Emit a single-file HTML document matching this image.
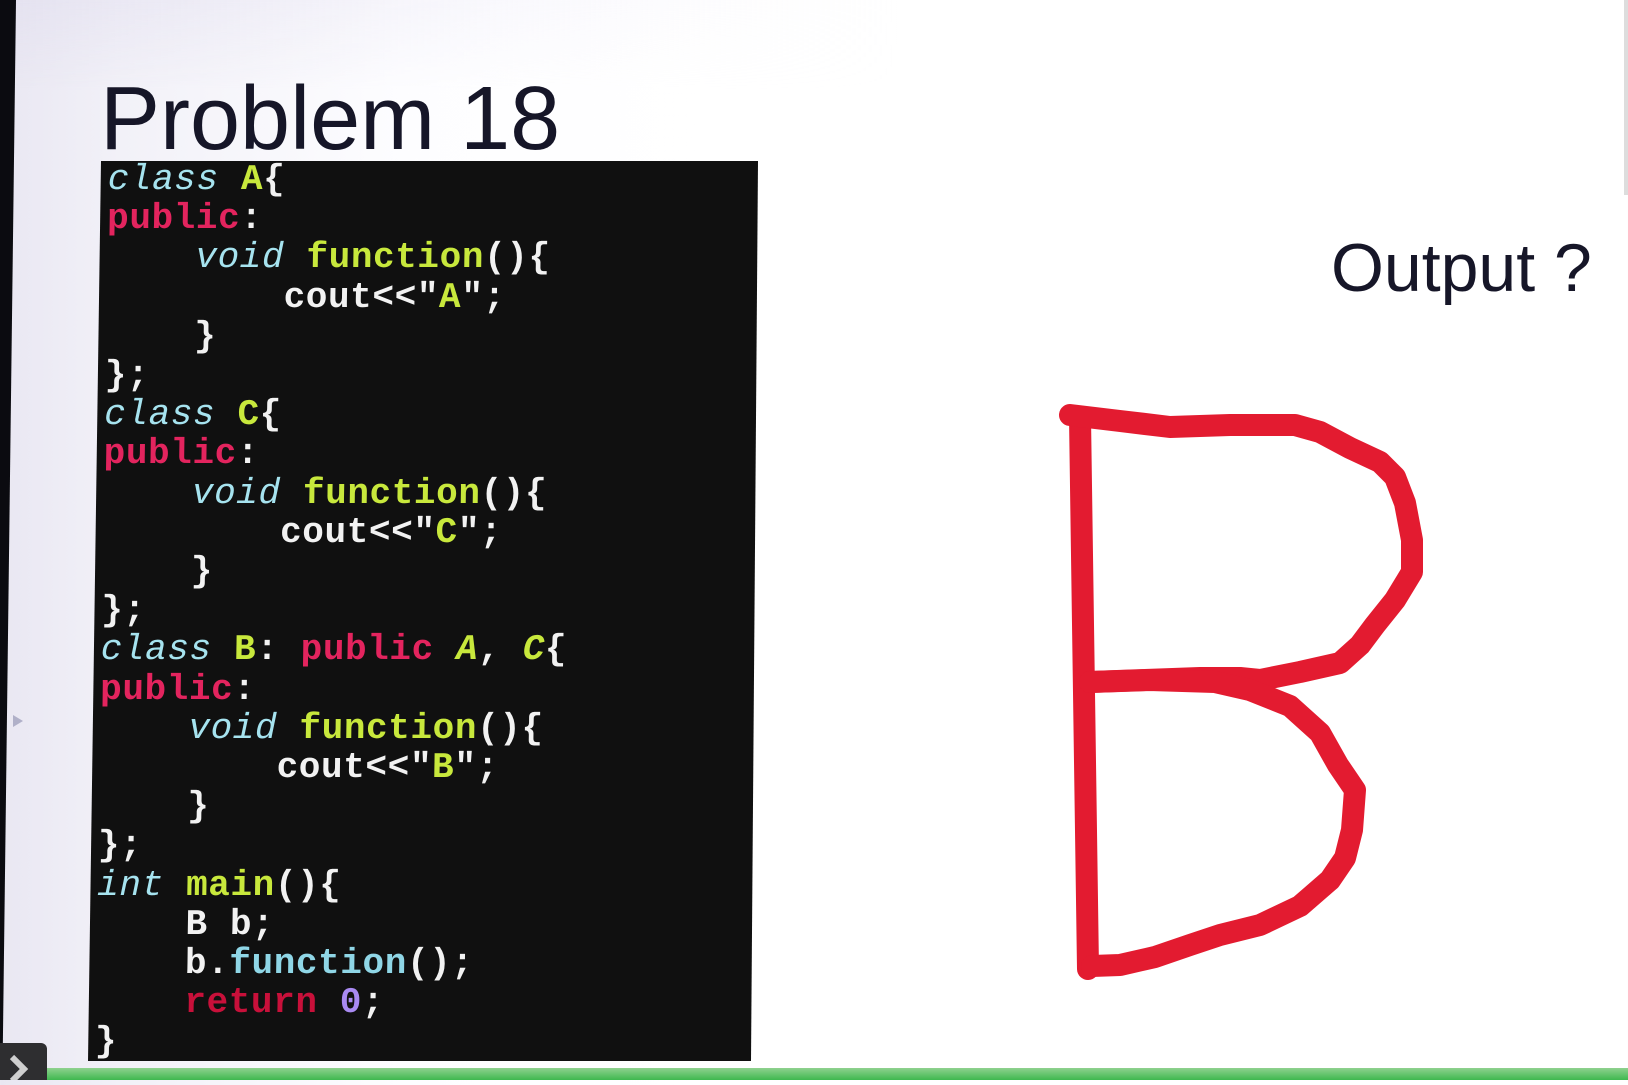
<!DOCTYPE html>
<html><head><meta charset="utf-8"><style>
html,body{margin:0;padding:0}
body{width:1628px;height:1080px;position:relative;overflow:hidden;
background:linear-gradient(90deg,#e9e7f2 0px,#f2f1f8 120px,#fdfdff 400px,#fff 700px);
font-family:"Liberation Sans",sans-serif}
.strip{position:absolute;left:0;top:0;width:16px;height:1080px;background:#0b0b10;clip-path:polygon(0 0,100% 0,15% 100%,0 100%)}
.topfade{position:absolute;left:0;top:0;width:1628px;height:90px;background:linear-gradient(90deg,rgba(225,222,238,.6),rgba(240,238,248,.3) 500px,rgba(255,255,255,0) 900px);-webkit-mask-image:linear-gradient(180deg,#000,transparent);mask-image:linear-gradient(180deg,#000,transparent)}
h1{position:absolute;left:100px;top:64px;margin:0;font-weight:normal;font-size:90px;line-height:110px;color:#161628;letter-spacing:0px}
.out{position:absolute;left:1331px;top:228px;font-size:68px;line-height:80px;color:#161628}
.box{position:absolute;left:88px;top:161px;width:672px;height:900px;background:#101010;
clip-path:polygon(13px 0,670px 0,663px 100%,0 100%)}
.code{position:absolute;left:108px;top:160px;font-family:"Liberation Mono","DejaVu Sans Mono",monospace;font-weight:bold;
font-size:36px;line-height:39.2px;letter-spacing:0.6px;white-space:pre;color:#f2f2f2;transform:skewX(-0.85deg);transform-origin:0 0}
.k{color:#a6e3ef;font-style:italic;font-weight:normal}
.p{color:#e3245e}
.g{color:#c8e83c}
.gi{color:#c8e83c;font-style:italic}
.r{color:#c8103a}
.n{color:#a98af2}
.c{color:#8fd6e6}
.green{position:absolute;left:0;top:1068px;width:1628px;height:12px;background:linear-gradient(180deg,#8fd18f,#3fb84f)}
.btn{position:absolute;left:0;top:1043px;width:47px;height:37px;background:#2e2e30;border-top-right-radius:6px}
.rline{position:absolute;left:1624px;top:0;width:4px;height:195px;background:#ddd}
</style></head><body>
<div class="topfade"></div>
<div class="strip"></div>
<div class="rline"></div>
<h1>Problem 18</h1>
<div class="out">Output ?</div>
<div class="box"></div>
<div class="code"><span class="k">class</span> <span class="g">A</span>{
<span class="p">public</span>:
    <span class="k">void</span> <span class="g">function</span>(){
        cout&lt;&lt;"<span class="g">A</span>";
    }
};
<span class="k">class</span> <span class="g">C</span>{
<span class="p">public</span>:
    <span class="k">void</span> <span class="g">function</span>(){
        cout&lt;&lt;"<span class="g">C</span>";
    }
};
<span class="k">class</span> <span class="g">B</span>: <span class="p">public</span> <span class="gi">A</span>, <span class="gi">C</span>{
<span class="p">public</span>:
    <span class="k">void</span> <span class="g">function</span>(){
        cout&lt;&lt;"<span class="g">B</span>";
    }
};
<span class="k">int</span> <span class="g">main</span>(){
    B b;
    b.<span class="c">function</span>();
    <span class="r">return</span> <span class="n">0</span>;
}</div>
<svg style="position:absolute;left:0;top:0" width="1628" height="1080" viewBox="0 0 1628 1080">
<g fill="none" stroke="#e31b30" stroke-width="22" stroke-linecap="round" stroke-linejoin="round">
<path d="M1080 417 L1088 969"/>
<path d="M1070 415 L1120 421 L1170 427 L1230 425 L1295 425 L1320 432 L1350 448 L1380 462 L1395 477 L1405 503 L1412 540 L1412 572 L1395 600 L1375 625 L1360 645 L1340 663 L1300 672 L1260 680 L1240 678 L1200 678 L1145 680 L1090 682"/>
<path d="M1090 682 L1150 680 L1215 682 L1250 690 L1290 706 L1320 733 L1338 765 L1355 790 L1352 830 L1345 858 L1330 880 L1300 906 L1260 925 L1220 935 L1190 945 L1155 957 L1120 965 L1092 966"/>
</g></svg>
<div class="green"></div>
<div class="btn"><svg width="47" height="37" viewBox="0 0 47 37"><path d="M12 14 L24 26 L12 38" fill="none" stroke="#cfcfcf" stroke-width="6"/></svg></div>
<svg style="position:absolute;left:12px;top:714px" width="12" height="14"><path d="M1 1 L11 7 L1 13 Z" fill="#b0b0c8"/></svg>
</body></html>
